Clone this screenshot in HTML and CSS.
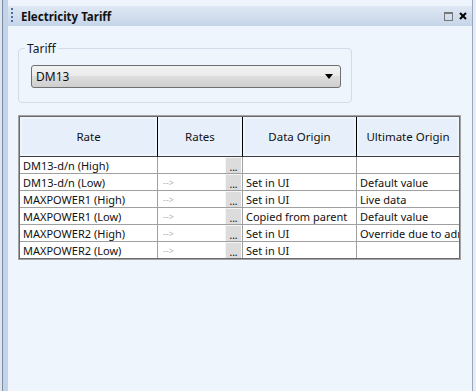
FILE: index.html
```html
<!DOCTYPE html>
<html>
<head>
<meta charset="utf-8">
<link rel="stylesheet" href="styles.css">
</head>
<body>
<div class="app">
  <div class="edge-left"></div>
  <div class="main">
    <div class="topgap"></div>
    <div class="titlebar">
      <span class="grip"></span>
      <span class="title">Electricity Tariff</span>
      <span class="tb-icons">
        <span class="ico-max"></span>
        <svg class="ico-close" width="8" height="8" viewBox="0 0 8 8"><path d="M1 1L7 7M7 1L1 7" stroke="#000" stroke-width="2"/></svg>
      </span>
    </div>
    <div class="content">
      <fieldset class="group">
        <legend class="group-label">Tariff</legend>
        <div class="combo">
          <span class="combo-text">DM13</span>
          <svg class="combo-arrow" width="8" height="5" viewBox="0 0 8 5"><path d="M0 0H8L4 5Z" fill="#000"/></svg>
        </div>
      </fieldset>
      <div class="grid-wrap">
        <table class="grid">
          <colgroup>
            <col class="c-rate"><col class="c-rates"><col class="c-data"><col class="c-ult">
          </colgroup>
          <thead>
            <tr><th>Rate</th><th>Rates</th><th>Data Origin</th><th class="last">Ultimate Origin</th></tr>
          </thead>
          <tbody>
            <tr><td>DM13-d/n (High)</td><td class="rates"><span class="arrow"></span><span class="btn">...</span></td><td></td><td class="last"></td></tr>
            <tr><td>DM13-d/n (Low)</td><td class="rates"><span class="arrow">--&gt;</span><span class="btn">...</span></td><td>Set in UI</td><td class="last">Default value</td></tr>
            <tr><td>MAXPOWER1 (High)</td><td class="rates"><span class="arrow">--&gt;</span><span class="btn">...</span></td><td>Set in UI</td><td class="last">Live data</td></tr>
            <tr><td>MAXPOWER1 (Low)</td><td class="rates"><span class="arrow">--&gt;</span><span class="btn">...</span></td><td>Copied from parent</td><td class="last">Default value</td></tr>
            <tr><td>MAXPOWER2 (High)</td><td class="rates"><span class="arrow">--&gt;</span><span class="btn">...</span></td><td>Set in UI</td><td class="last">Override due to admin</td></tr>
            <tr class="lastrow"><td>MAXPOWER2 (Low)</td><td class="rates"><span class="arrow">--&gt;</span><span class="btn">...</span></td><td>Set in UI</td><td class="last"></td></tr>
          </tbody>
        </table>
      </div>
    </div>
  </div>
  <div class="edge-right"></div>
</div>
</body>
</html>
```
FILE: styles.css
```css
* { box-sizing: border-box; }
html, body { margin: 0; padding: 0; }
body {
  width: 476px;
  height: 391px;
  overflow: hidden;
  font-family: "Noto Sans", "DejaVu Sans", sans-serif;
  font-size: 11px;
  color: #111;
  background: #eef5fd;
}
.app {
  display: flex;
  width: 476px;
  height: 391px;
}
.edge-left {
  width: 8px;
  flex: none;
  background: linear-gradient(to right, #dde5ef 0 2px, #7d8ca3 2px 3px, #c3d3ea 3px 8px);
}
.edge-right {
  width: 4px;
  flex: none;
  border-left: 1px solid #9aa7b8;
  background: #e6edf6;
}
.main {
  flex: 1;
  display: flex;
  flex-direction: column;
  min-width: 0;
}
.topgap {
  height: 6px;
  background: #eef4fb;
}
.titlebar {
  height: 20px;
  display: flex;
  align-items: center;
  background: linear-gradient(to bottom, #dfe8f4, #c6d5ea);
}
.grip {
  width: 2px;
  height: 16px;
  margin-left: 3px;
  background: repeating-linear-gradient(to bottom, #4670b0 0 2px, transparent 2px 4px);
}
.title {
  margin-left: 8px;
  font-weight: bold;
  font-size: 11.5px;
  color: #111;
}
.tb-icons {
  margin-left: auto;
  margin-right: 5px;
  display: flex;
  align-items: center;
  gap: 6px;
}
.ico-max {
  width: 9px;
  height: 9px;
  border: 1px solid #777;
  border-top-width: 2px;
}
.ico-close { display: block; }
.content {
  flex: 1;
  padding: 14px 0 0 10px;
}
.group {
  width: 334px;
  margin: 0;
  padding: 8px 10px 14px 12px;
  border: 1px solid #d2dce8;
  border-radius: 4px;
  min-width: 0;
}
.group-label {
  margin-left: -6px;
  padding: 0 2px;
  font-size: 12px;
  color: #1a1a1a;
}
.combo {
  width: 310px;
  height: 23px;
  display: flex;
  align-items: center;
  padding: 0 3px 0 4px;
  border: 1px solid #707070;
  border-radius: 3px;
  background: linear-gradient(to bottom, #f2f2f2 0%, #ebebeb 45%, #dddddd 50%, #cfcfcf 100%);
  font-size: 12px;
}
.combo-text { flex: 1; }
.combo-arrow { margin-right: 4px; }
.grid-wrap {
  width: 443px;
  margin-top: 12px;
  border: 1px solid #a3a3a3;
}
.grid {
  width: 441px;
  table-layout: fixed;
  border-collapse: separate;
  border-spacing: 0;
  border: 1px solid #6a6a6a;
  background: #fff;
}
.c-rate { width: 138px; }
.c-rates { width: 85px; }
.c-data { width: 114px; }
.c-ult { width: 102px; }
.grid thead tr { height: 40px; }
.grid tbody tr { height: 17px; }
.grid tbody tr.lastrow { height: 16px; }
.grid th {
  height: 40px;
  padding: 0;
  font-weight: normal;
  text-align: center;
  background: #e7f0fa;
  box-shadow: inset 0 0 0 2px #eef5fd;
  border-right: 1px solid #000;
  border-bottom: 1px solid #404040;
  font-size: 11.5px;
}
.grid th.last, .grid td.last { border-right: none; }
.grid td {
  height: 17px;
  padding: 0 0 0 3px;
  border-right: 1px solid #a0a0a0;
  border-bottom: 1px solid #a0a0a0;
  white-space: nowrap;
  overflow: hidden;
  line-height: 15px;
  vertical-align: middle;
}
.grid tr.lastrow td { border-bottom: none; height: 16px; }
.grid td.rates {
  padding: 0;
  position: relative;
}
.rates .arrow {
  display: block;
  height: 15px;
  padding-left: 5px;
  line-height: 15px;
  color: #b4b4b4;
  font-size: 9px;
}
.rates .btn {
  position: absolute;
  right: 1px;
  top: 0;
  width: 16px;
  height: 16px;
  background: #dcdcdc;
  border-left: 1px solid #f4f4f4;
  border-top: 1px solid #f4f4f4;
  font-size: 10px;
  line-height: 18px;
  text-align: center;
  color: #000;
}
```
